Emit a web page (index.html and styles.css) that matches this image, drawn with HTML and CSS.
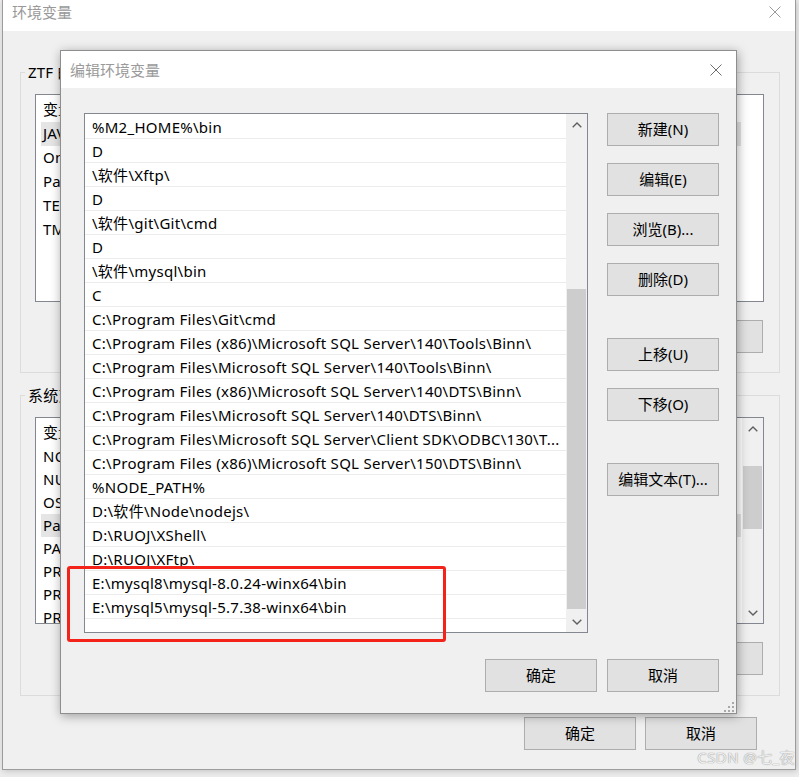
FILE: index.html
```html
<!DOCTYPE html>
<html lang="zh-CN">
<head>
<meta charset="utf-8">
<title>编辑环境变量</title>
<link rel="stylesheet" href="styles.css">
</head>
<body>
<div class="desk">
  <div class="win bgwin">
    <div class="titlebar bgtitle">
      <span class="title">环境变量</span>
      <svg class="xbtn" width="12" height="12" viewBox="0 0 12 12"><path d="M0.5 0.5 L11.5 11.5 M11.5 0.5 L0.5 11.5" stroke="#9a9a9a" stroke-width="1"/></svg>
    </div>
    <div class="bgbody">
      <div class="group g1">
        <span class="legend">ZTF 的用户变量(U)</span>
        <div class="lv lv-user">
          <div class="lvcol">
            <div class="lvhead">变量</div>
            <div class="lvrow sel">JAVA_HOME</div>
            <div class="lvrow">OneDrive</div>
            <div class="lvrow">Path</div>
            <div class="lvrow">TEMP</div>
            <div class="lvrow">TMP</div>
          </div>
        </div>
        <div class="grpbtns">
          <button class="btn">新建(N)...</button>
          <button class="btn">编辑(E)...</button>
          <button class="btn">删除(D)</button>
        </div>
      </div>
      <div class="group g2">
        <span class="legend">系统变量(S)</span>
        <div class="lv lv-sys">
          <div class="lvcol">
            <div class="lvhead">变量</div>
            <div class="lvrow">NODE_PATH</div>
            <div class="lvrow">NUMBER_OF_PROCESSORS</div>
            <div class="lvrow">OS</div>
            <div class="lvrow sel">Path</div>
            <div class="lvrow">PATHEXT</div>
            <div class="lvrow">PROCESSOR_ARCHITECTURE</div>
            <div class="lvrow">PROCESSOR_IDENTIFIER</div>
            <div class="lvrow">PROCESSOR_LEVEL</div>
          </div>
          <div class="sbar sbar-sys">
            <div class="sarrow"><svg width="10" height="6" viewBox="0 0 10 6"><path d="M0.7 5.3 L5 1 L9.3 5.3" fill="none" stroke="#606060" stroke-width="1.4"/></svg></div>
            <div class="strack"><div class="sthumb thumb-sys"></div></div>
            <div class="sarrow"><svg width="10" height="6" viewBox="0 0 10 6"><path d="M0.7 0.7 L5 5 L9.3 0.7" fill="none" stroke="#606060" stroke-width="1.4"/></svg></div>
          </div>
        </div>
        <div class="grpbtns">
          <button class="btn">新建(W)...</button>
          <button class="btn">编辑(I)...</button>
          <button class="btn">删除(L)</button>
        </div>
      </div>
      <div class="footer bgfooter">
        <button class="btn">确定</button>
        <button class="btn">取消</button>
      </div>
    </div>
  </div>

  <div class="win dlg">
    <div class="titlebar dlgtitle">
      <span class="title">编辑环境变量</span>
      <svg class="xbtn" width="12" height="12" viewBox="0 0 12 12"><path d="M0.5 0.5 L11.5 11.5 M11.5 0.5 L0.5 11.5" stroke="#6e6e6e" stroke-width="1"/></svg>
    </div>
    <div class="dlgbody">
      <div class="pathlist">
        <div class="rows">
          <div class="prow">%M2_HOME%\bin</div>
          <div class="prow">D</div>
          <div class="prow">\软件\Xftp\</div>
          <div class="prow">D</div>
          <div class="prow">\软件\git\Git\cmd</div>
          <div class="prow">D</div>
          <div class="prow">\软件\mysql\bin</div>
          <div class="prow">C</div>
          <div class="prow">C:\Program Files\Git\cmd</div>
          <div class="prow">C:\Program Files (x86)\Microsoft SQL Server\140\Tools\Binn\</div>
          <div class="prow">C:\Program Files\Microsoft SQL Server\140\Tools\Binn\</div>
          <div class="prow">C:\Program Files (x86)\Microsoft SQL Server\140\DTS\Binn\</div>
          <div class="prow">C:\Program Files\Microsoft SQL Server\140\DTS\Binn\</div>
          <div class="prow">C:\Program Files\Microsoft SQL Server\Client SDK\ODBC\130\T...</div>
          <div class="prow">C:\Program Files (x86)\Microsoft SQL Server\150\DTS\Binn\</div>
          <div class="prow">%NODE_PATH%</div>
          <div class="prow">D:\软件\Node\nodejs\</div>
          <div class="prow">D:\RUOJ\XShell\</div>
          <div class="prow">D:\RUOJ\XFtp\</div>
          <div class="prow">E:\mysql8\mysql-8.0.24-winx64\bin</div>
          <div class="prow">E:\mysql5\mysql-5.7.38-winx64\bin</div>
          <div class="prow"></div>
        </div>
        <div class="sbar sbar-dlg">
          <div class="sarrow"><svg width="10" height="6" viewBox="0 0 10 6"><path d="M0.7 5.3 L5 1 L9.3 5.3" fill="none" stroke="#606060" stroke-width="1.4"/></svg></div>
          <div class="strack"><div class="sthumb thumb-dlg"></div></div>
          <div class="sarrow"><svg width="10" height="6" viewBox="0 0 10 6"><path d="M0.7 0.7 L5 5 L9.3 0.7" fill="none" stroke="#606060" stroke-width="1.4"/></svg></div>
        </div>
      </div>
      <div class="sidebtns">
        <button class="btn">新建(N)</button>
        <button class="btn">编辑(E)</button>
        <button class="btn">浏览(B)...</button>
        <button class="btn">删除(D)</button>
        <button class="btn gap-big">上移(U)</button>
        <button class="btn">下移(O)</button>
        <button class="btn gap-big">编辑文本(T)...</button>
      </div>
      <div class="footer dlgfooter">
        <button class="btn">确定</button>
        <button class="btn">取消</button>
      </div>
    </div>
    <div class="grip">
      <i class="d d1"></i><i class="d d2"></i><i class="d d3"></i>
      <i class="d d4"></i><i class="d d5"></i><i class="d d6"></i>
    </div>
  </div>

  <div class="mark"></div>
  <div class="wm">CSDN @七_夜</div>
</div>
</body>
</html>
```

FILE: styles.css
```css
* { box-sizing: border-box; }

html, body {
  margin: 0;
  padding: 0;
}

body {
  width: 799px;
  height: 777px;
  overflow: hidden;
  background: #ececec;
  font-family: "Noto Sans", "Noto Sans CJK SC", sans-serif;
  font-size: 15px;
  color: #000;
}

.desk {
  position: relative;
  width: 799px;
  height: 777px;
}

.win {
  position: absolute;
  background: #f0f0f0;
  display: flex;
  flex-direction: column;
}

/* ---------- background window ---------- */
.bgwin {
  left: 2px;
  top: 0;
  width: 794px;
  height: 770px;
  border: 1px solid #9c9c9c;
  border-top: none;
  box-shadow: 1px 1px 6px rgba(0, 0, 0, 0.18);
}

.titlebar {
  background: #fff;
  display: flex;
  align-items: center;
  justify-content: space-between;
  flex: none;
}

.title {
  color: #999;
  font-family: "Noto Sans CJK SC", "Noto Sans", sans-serif;
  font-size: 15px;
  line-height: 20px;
}

.bgtitle {
  height: 31px;
  padding: 0 14px 7px 9px;
}

.bgbody {
  padding: 0 15px 0 17px;
  display: flex;
  flex-direction: column;
}

.group {
  position: relative;
  height: 301px;
  border: 1px solid #dcdcdc;
  padding: 21px 15px 0 14px;
  display: flex;
  flex-direction: column;
}

.g1 { margin-top: 41px; }
.g2 { margin-top: 22px; }

.legend {
  position: absolute;
  top: -11px;
  left: 4px;
  padding: 0 3px;
  line-height: 20px;
  background: #f0f0f0;
  letter-spacing: 0.2px;
}

.lv {
  background: #fff;
  border: 1px solid #828790;
  display: flex;
  overflow: hidden;
}

.lv-user { height: 208px; }
.lv-sys { height: 207px; }

.lvcol {
  flex: 1;
  display: flex;
  flex-direction: column;
}

.lvhead {
  height: 27px;
  line-height: 27px;
  padding-left: 7px;
  font-family: "Noto Sans CJK SC", sans-serif;
}

.lvrow {
  height: 24px;
  line-height: 23px;
  width: 700px;
  margin-left: 5px;
  padding-left: 2px;
  letter-spacing: 0.25px;
}

.lvrow.sel { background: #e5e5e5; }

.grpbtns {
  margin-top: 18px;
  padding-right: 1px;
  display: flex;
  justify-content: flex-end;
  gap: 10px;
}

.btn {
  width: 112px;
  height: 33px;
  margin: 0;
  padding: 0;
  background: #e1e1e1;
  border: 1px solid #adadad;
  border-radius: 0;
  font-family: "Noto Sans", "Noto Sans CJK SC", sans-serif;
  font-size: 15px;
  color: #000;
  line-height: 31px;
}

.bgfooter {
  margin-top: 21px;
  padding-right: 23px;
  display: flex;
  justify-content: flex-end;
  gap: 9px;
}

/* ---------- scrollbars ---------- */
.sbar {
  width: 21px;
  flex: none;
  background: #f0f0f0;
  display: flex;
  flex-direction: column;
}

.sarrow {
  height: 21px;
  flex: none;
  display: flex;
  align-items: center;
  justify-content: center;
}

.strack {
  flex: 1;
  display: flex;
  flex-direction: column;
}

.sthumb {
  margin: 0 1px;
  background: #cdcdcd;
}

.thumb-sys {
  margin-top: 27px;
  height: 63px;
}

.thumb-dlg {
  margin-top: 154px;
  height: 320px;
}

/* ---------- edit dialog ---------- */
.dlg {
  left: 60px;
  top: 50px;
  width: 677px;
  height: 664px;
  border: 1px solid #8e8e8e;
  box-shadow: 1px 2px 10px rgba(0, 0, 0, 0.35);
}

.dlgtitle {
  height: 37px;
  padding: 0 14px 0 9px;
}

.dlgtitle .title { color: #9a9a9a; }

.dlgbody {
  flex: 1;
  padding: 25px 17px 21px 23px;
  display: grid;
  grid-template-columns: 504px 112px;
  grid-template-rows: 520px 33px;
  column-gap: 19px;
  row-gap: 26px;
}

.pathlist {
  background: #fff;
  border: 1px solid #828790;
  display: flex;
  overflow: hidden;
}

.rows {
  flex: 1;
  padding-top: 1px;
  display: flex;
  flex-direction: column;
}

.prow {
  height: 24px;
  flex: none;
  border-bottom: 1px solid #ececec;
  padding-left: 7px;
  line-height: 24px;
  white-space: nowrap;
  overflow: hidden;
  letter-spacing: 0.27px;
}

.sidebtns {
  display: flex;
  flex-direction: column;
  gap: 17px;
}

.sidebtns .gap-big { margin-top: 25px; }

.dlgfooter {
  grid-column: 1 / span 2;
  display: flex;
  justify-content: flex-end;
  gap: 10px;
}

.grip {
  position: absolute;
  right: 2px;
  bottom: 1px;
  width: 11px;
  height: 11px;
}

.grip .d {
  position: absolute;
  width: 2px;
  height: 2px;
  background: #a8a8a8;
}

.d1 { right: 0; bottom: 0; }
.d2 { right: 4px; bottom: 0; }
.d3 { right: 8px; bottom: 0; }
.d4 { right: 0; bottom: 4px; }
.d5 { right: 4px; bottom: 4px; }
.d6 { right: 0; bottom: 8px; }

/* ---------- annotation ---------- */
.mark {
  position: absolute;
  left: 67px;
  top: 566px;
  width: 379px;
  height: 76px;
  border: 3px solid #f4231a;
  border-radius: 3px;
}

.wm {
  position: absolute;
  right: 4px;
  top: 748px;
  font-family: "Noto Sans", "Noto Sans CJK SC", sans-serif;
  font-size: 15px;
  line-height: 18px;
  letter-spacing: 0.4px;
  color: rgba(255, 255, 255, 0.85);
  text-shadow: 0 0 1px #9a9a9a, 0 0 1px #9a9a9a;
}
```
